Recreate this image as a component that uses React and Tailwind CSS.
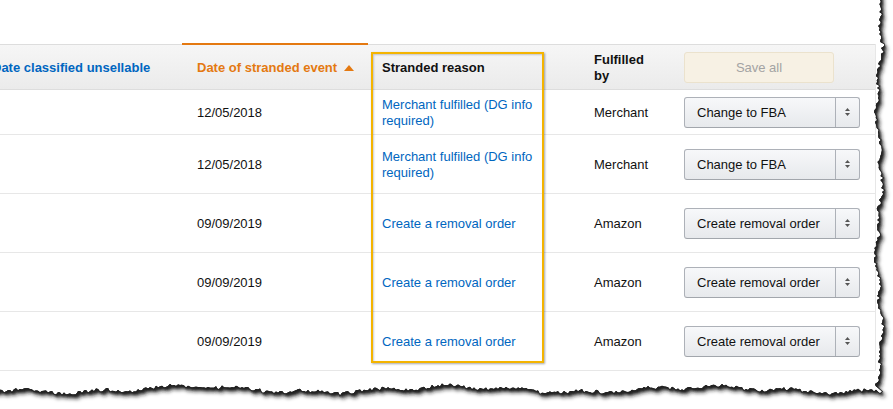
import React from 'react'

// little deterministic noise for the torn paper edge
function makeRand(seed) {
  let s = seed
  return () => {
    s = (s * 9301 + 49297) % 233280
    return s / 233280
  }
}

function buildPaper() {
  const r = makeRand(7)
  const right = []
  for (let y = 0; y <= 386; y += 2) {
    const x = 879 + 2.4 * Math.sin(y / 23) + 1.5 * Math.sin(y / 7.3 + 1) + (r() - 0.5) * 3.6
    right.push([x, y])
  }
  const bottom = []
  for (let x = 882; x >= -6; x -= 2) {
    const y = 389.5 + 2.8 * Math.sin(x / 41) + 1.6 * Math.sin(x / 11 + 2) + (r() - 0.5) * 3.6
    bottom.push([x, y])
  }
  const pts = [[-10, -10], [right[0][0], -10], ...right, ...bottom, [-10, bottom[bottom.length - 1][1]]]
  return 'M' + pts.map(p => p[0].toFixed(1) + ',' + p[1].toFixed(1)).join(' L') + ' Z'
}

const paper = buildPaper()
const frame = 'M-20,-20 L913,-20 L913,429 L-20,429 Z '

function TornEdge() {
  return (
    <svg className="absolute inset-0 pointer-events-none" width="893" height="409" viewBox="0 0 893 409">
      <defs>
        <filter id="tornBlur" x="-10%" y="-10%" width="120%" height="120%">
          <feGaussianBlur stdDeviation="2.2" />
        </filter>
        <filter id="tornBlurTight" x="-10%" y="-10%" width="120%" height="120%">
          <feGaussianBlur stdDeviation="0.9" />
        </filter>
        <clipPath id="outside">
          <path d={frame + paper} clipRule="evenodd" />
        </clipPath>
      </defs>
      <path d={frame + paper} fill="#fff" fillRule="evenodd" />
      <g clipPath="url(#outside)">
        <path d={paper} fill="#1a1a1a" transform="translate(3,4)" filter="url(#tornBlur)" />
        <path d={paper} fill="#222" transform="translate(1.5,2)" filter="url(#tornBlurTight)" />
        <path d={paper} fill="none" stroke="#222" strokeWidth="1.4" />
      </g>
    </svg>
  )
}

function Arrows() {
  return (
    <svg width="7" height="10" viewBox="0 0 7 10">
      <path d="M3.5 1 L6 4 L1 4 Z" fill="#555" />
      <path d="M3.5 9 L6 6 L1 6 Z" fill="#555" />
    </svg>
  )
}

function Dropdown({ label }) {
  return (
    <div className="flex h-[31px] w-[176px] rounded-[3px] border border-[#adb1b8] border-b-[#a2a6ac] bg-gradient-to-b from-[#f7f8fa] to-[#e7e9ec] text-[13px] text-[#111]">
      <div className="flex flex-1 items-center pl-[12px] pt-[1px]">{label}</div>
      <div className="flex w-[24px] items-center justify-center border-l border-[#adb1b8]">
        <Arrows />
      </div>
    </div>
  )
}

const rows = [
  { date: '12/05/2018', reason: 'Merchant fulfilled (DG info required)', by: 'Merchant', action: 'Change to FBA', h: 'h-[45px]' },
  { date: '12/05/2018', reason: 'Merchant fulfilled (DG info required)', by: 'Merchant', action: 'Change to FBA', h: 'h-[59px]' },
  { date: '09/09/2019', reason: 'Create a removal order', by: 'Amazon', action: 'Create removal order', h: 'h-[59px]' },
  { date: '09/09/2019', reason: 'Create a removal order', by: 'Amazon', action: 'Create removal order', h: 'h-[59px]' },
  { date: '09/09/2019', reason: 'Create a removal order', by: 'Amazon', action: 'Create removal order', h: 'h-[59px]' },
]

export default function App() {
  return (
    <div className="relative h-[409px] w-[893px] overflow-hidden bg-white pt-[44px] font-['Liberation_Sans',Arial,sans-serif] text-[13px] leading-[16px]">
      <div className="w-[876px] border-r border-[#e7e7e7]">
        {/* header */}
        <div className="flex h-[46px] border-y border-[#dddddd] bg-gradient-to-b from-[#f6f6f6] to-[#ebebeb] font-bold">
          <div className="flex w-[182px] items-center pt-[2px]">
            <span className="ml-[-8px] whitespace-nowrap text-[#0066c0]">Date classified unsellable</span>
          </div>
          <div className="mt-[-2px] flex w-[186px] items-center gap-[7px] border-t-2 border-[#e47911] pl-[15px] pt-[2px] text-[#e47911]">
            <span className="whitespace-nowrap">Date of stranded event</span>
            <svg width="10" height="6" viewBox="0 0 10 6"><path d="M5 0 L10 6 L0 6 Z" fill="#e47911" /></svg>
          </div>
          <div className="flex w-[212px] items-center pl-[14px] pt-[2px] text-[#111]">Stranded reason</div>
          <div className="flex w-[90px] items-center pl-[14px] pt-[2px] text-[#111]">
            <span className="w-[60px]">Fulfilled by</span>
          </div>
          <div className="flex flex-1 items-center pl-[14px]">
            <div className="flex h-[31px] w-[150px] items-center justify-center rounded-[3px] border border-[#ebe2cd] bg-[#f7f1e4] pt-[1px] font-normal text-[#a3a3a3]">
              Save all
            </div>
          </div>
        </div>
        {/* body */}
        {rows.map((row, i) => (
          <div key={i} className={`flex ${row.h} border-b border-[#e7e7e7] text-[#111]`}>
            <div className="w-[182px]" />
            <div className="flex w-[186px] items-center pl-[15px] pt-[2px]">{row.date}</div>
            <div className="flex w-[212px] items-center pl-[14px] pt-[2px] text-[#0066c0]">
              <span className="w-[160px]">{row.reason}</span>
            </div>
            <div className="flex w-[90px] items-center pl-[14px] pt-[2px]">{row.by}</div>
            <div className="flex flex-1 items-center pl-[14px]">
              <Dropdown label={row.action} />
            </div>
          </div>
        ))}
      </div>

      {/* highlight around the stranded reason column */}
      <div className="absolute left-[371px] top-[52px] h-[311px] w-[173px] border-2 border-[#f4b400] shadow-[1px_1px_2px_rgba(0,0,0,0.35),inset_1px_1px_2px_rgba(0,0,0,0.2)]" />

      <TornEdge />
    </div>
  )
}
